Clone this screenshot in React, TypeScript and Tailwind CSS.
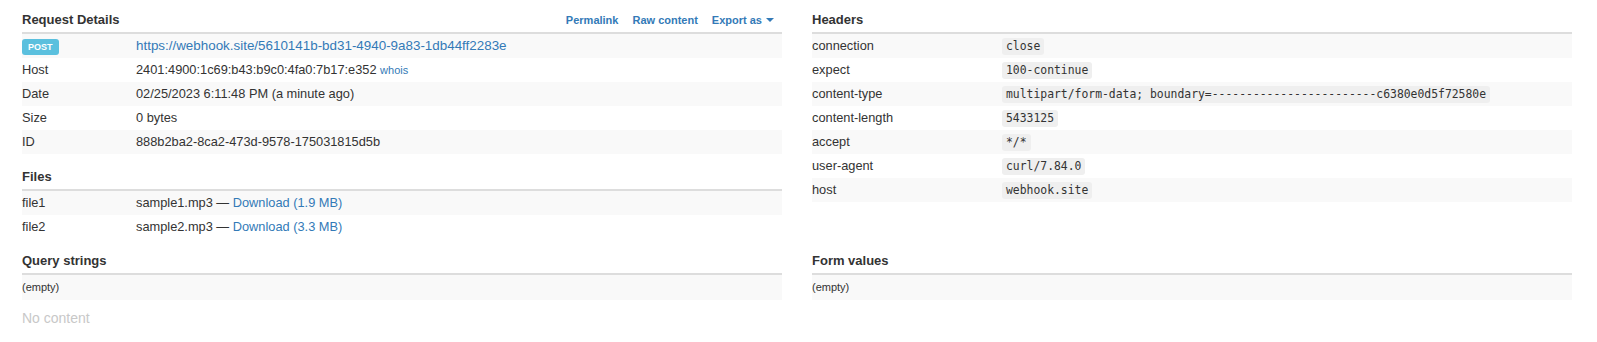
import React from "react";

const font = { fontFamily: '"Liberation Sans", Arial, sans-serif' };

function Heading({ title, children }: { title: string; children?: React.ReactNode }) {
  return (
    <div className="flex items-center justify-between h-[18px] mb-[3px]">
      <h3 className="text-[13px] font-bold leading-[18px] text-[#333]">{title}</h3>
      {children}
    </div>
  );
}

function Rows({
  rows,
  labelWidth,
}: {
  rows: { label: React.ReactNode; value: React.ReactNode }[];
  labelWidth: string;
}) {
  return (
    <div className="border-t-2 border-[#ddd]">
      {rows.map((r, i) => (
        <div
          key={i}
          className={`flex items-center h-[24px] text-[12.8px] text-[#333] ${i % 2 === 0 ? "bg-[#f9f9f9]" : ""}`}
        >
          <div className={`${labelWidth} shrink-0`}>{r.label}</div>
          <div className="flex-1 min-w-0 whitespace-nowrap">{r.value}</div>
        </div>
      ))}
    </div>
  );
}

function Code({ children }: { children: React.ReactNode }) {
  return (
    <code
      className="inline-block rounded-[3px] bg-[#efefef] px-[4px] py-[2px] text-[11.4px] leading-[13px] text-[#333]"
      style={{ fontFamily: '"DejaVu Sans Mono", "Liberation Mono", monospace' }}
    >
      {children}
    </code>
  );
}

function Link({ children, className = "" }: { children: React.ReactNode; className?: string }) {
  return <a className={`text-[#337ab7] ${className}`}>{children}</a>;
}

function Empty() {
  return (
    <div className="border-t-2 border-[#ddd]">
      <div className="flex items-center h-[25px] bg-[#f9f9f9] text-[11px] text-[#333]">(empty)</div>
    </div>
  );
}

export default function App() {
  const details = [
    {
      label: (
        <span className="inline-block rounded-[3px] bg-[#5bc0de] px-[6px] h-[16px] leading-[16px] text-[9px] font-bold text-white align-middle">
          POST
        </span>
      ),
      value: <Link className="text-[13.4px]">https://webhook.site/5610141b-bd31-4940-9a83-1db44ff2283e</Link>,
    },
    {
      label: "Host",
      value: (
        <>
          2401:4900:1c69:b43:b9c0:4fa0:7b17:e352 <Link className="text-[11px]">whois</Link>
        </>
      ),
    },
    { label: "Date", value: "02/25/2023 6:11:48 PM (a minute ago)" },
    { label: "Size", value: "0 bytes" },
    { label: "ID", value: "888b2ba2-8ca2-473d-9578-175031815d5b" },
  ];

  const files = [
    {
      label: "file1",
      value: (
        <>
          sample1.mp3 — <Link>Download (1.9 MB)</Link>
        </>
      ),
    },
    {
      label: "file2",
      value: (
        <>
          sample2.mp3 — <Link>Download (3.3 MB)</Link>
        </>
      ),
    },
  ];

  const headers = [
    ["connection", "close"],
    ["expect", "100-continue"],
    ["content-type", "multipart/form-data; boundary=------------------------c6380e0d5f72580e"],
    ["content-length", "5433125"],
    ["accept", "*/*"],
    ["user-agent", "curl/7.84.0"],
    ["host", "webhook.site"],
  ].map(([k, v]) => ({ label: k, value: <Code>{v}</Code> }));

  return (
    <div className="bg-white min-h-[342px] pl-[22px] pr-[25px] pt-[11px]" style={font}>
      <div className="grid grid-cols-2 gap-x-[30px]">
        <div>
          <Heading title="Request Details">
            <div className="flex items-center gap-[14px] pr-[8px] text-[11px] font-bold text-[#337ab7]">
              <a>Permalink</a>
              <a>Raw content</a>
              <a className="flex items-center gap-[4px]">
                Export as
                <span className="inline-block w-0 h-0 border-l-[4px] border-r-[4px] border-t-[4px] border-l-transparent border-r-transparent border-t-[#337ab7]" />
              </a>
            </div>
          </Heading>
          <Rows rows={details} labelWidth="w-[15%]" />
          <div className="mt-[14px]">
            <Heading title="Files" />
            <Rows rows={files} labelWidth="w-[15%]" />
          </div>
        </div>
        <div>
          <Heading title="Headers" />
          <Rows rows={headers} labelWidth="w-[25%]" />
        </div>

        <div className="mt-[13px]">
          <Heading title="Query strings" />
          <Empty />
          <p className="mt-[8px] text-[14px] text-[#c8c8c8]">No content</p>
        </div>
        <div className="mt-[13px]">
          <Heading title="Form values" />
          <Empty />
        </div>
      </div>
    </div>
  );
}
